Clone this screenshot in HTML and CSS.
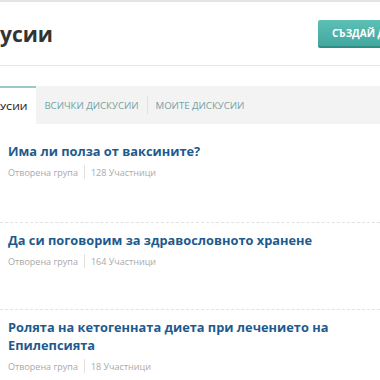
FILE: index.html
```html
<!DOCTYPE html>
<html lang="bg">
<head>
<meta charset="utf-8">
<link rel="stylesheet" href="styles.css">
</head>
<body>
<div class="page">
  <div class="topline"></div>
  <header class="header">
    <h1 class="title">Дискусии</h1>
    <button class="btn">Създай дискусия</button>
  </header>
  <nav class="tabs">
    <a class="tab active">Популярни дискусии</a>
    <a class="tab">Всички дискусии</a>
    <span class="sep"></span>
    <a class="tab">Моите дискусии</a>
  </nav>
  <ul class="list">
    <li class="item">
      <h2 class="item-title">Има ли полза от ваксините?</h2>
      <div class="meta"><span>Отворена група</span><span class="bar"></span><span>128 Участници</span></div>
    </li>
    <li class="item">
      <h2 class="item-title">Да си поговорим за здравословното хранене</h2>
      <div class="meta"><span>Отворена група</span><span class="bar"></span><span>164 Участници</span></div>
    </li>
    <li class="item">
      <h2 class="item-title">Ролята на кетогенната диета при лечението на Епилепсията</h2>
      <div class="meta"><span>Отворена група</span><span class="bar"></span><span>18 Участници</span></div>
    </li>
  </ul>
</div>
</body>
</html>
```
FILE: styles.css
```css
html, body {
  margin: 0;
  padding: 0;
  background: #fff;
  overflow: hidden;
}
body {
  font-family: "Open Sans", "Noto Sans", sans-serif;
  width: 380px;
  height: 380px;
}
.page {
  width: 380px;
}
.topline {
  height: 2px;
  background: #e4e4e4;
}
.header {
  display: flex;
  align-items: center;
  justify-content: space-between;
  height: 63px;
  border-bottom: 1px solid #e6e6e6;
  overflow: hidden;
}
.title {
  margin: 0 0 0 -55px;
  font-size: 21px;
  font-weight: 700;
  color: #333;
  white-space: nowrap;
}
.btn {
  flex: none;
  width: 150px;
  margin-right: -88px;
  height: 28px;
  padding: 0 0 0 14px;
  text-align: left;
  border: 0;
  border-bottom: 2px solid #2f8d85;
  border-radius: 2px;
  background: linear-gradient(#5dc0b7, #42a79e);
  color: #fff;
  font-family: inherit;
  font-weight: 700;
  font-size: 10px;
  text-transform: uppercase;
  white-space: nowrap;
}
.tabs {
  display: flex;
  align-items: center;
  margin-top: 20px;
  height: 38px;
  background: #f3f3f3;
  overflow: hidden;
}
.tab {
  flex: none;
  display: flex;
  align-items: center;
  height: 100%;
  padding: 0 8px;
  font-size: 9.6px;
  text-transform: uppercase;
  color: #72a2a6;
  white-space: nowrap;
  box-sizing: border-box;
}
.tab.active {
  margin-left: -99px;
  padding-right: 9px;
  background: #fff;
  color: #333;
  font-weight: 600;
  border-top: 2px solid #9cc6c9;
}
.sep {
  flex: none;
  width: 1px;
  height: 18px;
  background: #e0e0e0;
}
.list {
  list-style: none;
  margin: 0;
  padding: 0;
}
.item {
  padding: 8px 0 41px 8px;
  border-top: 1px dashed #e2e2e2;
}
.item:first-child {
  border-top: 0;
  padding-top: 18px;
  padding-bottom: 43px;
}
.item-title {
  margin: 0;
  font-size: 12.8px;
  line-height: 18px;
  font-weight: 700;
  color: #1d5a8e;
}
.meta {
  display: flex;
  align-items: center;
  margin-top: 5px;
  font-size: 9px;
  color: #a9a9a9;
}
.bar {
  width: 1px;
  height: 14px;
  margin: 0 6px;
  background: #e0e0e0;
}
```
